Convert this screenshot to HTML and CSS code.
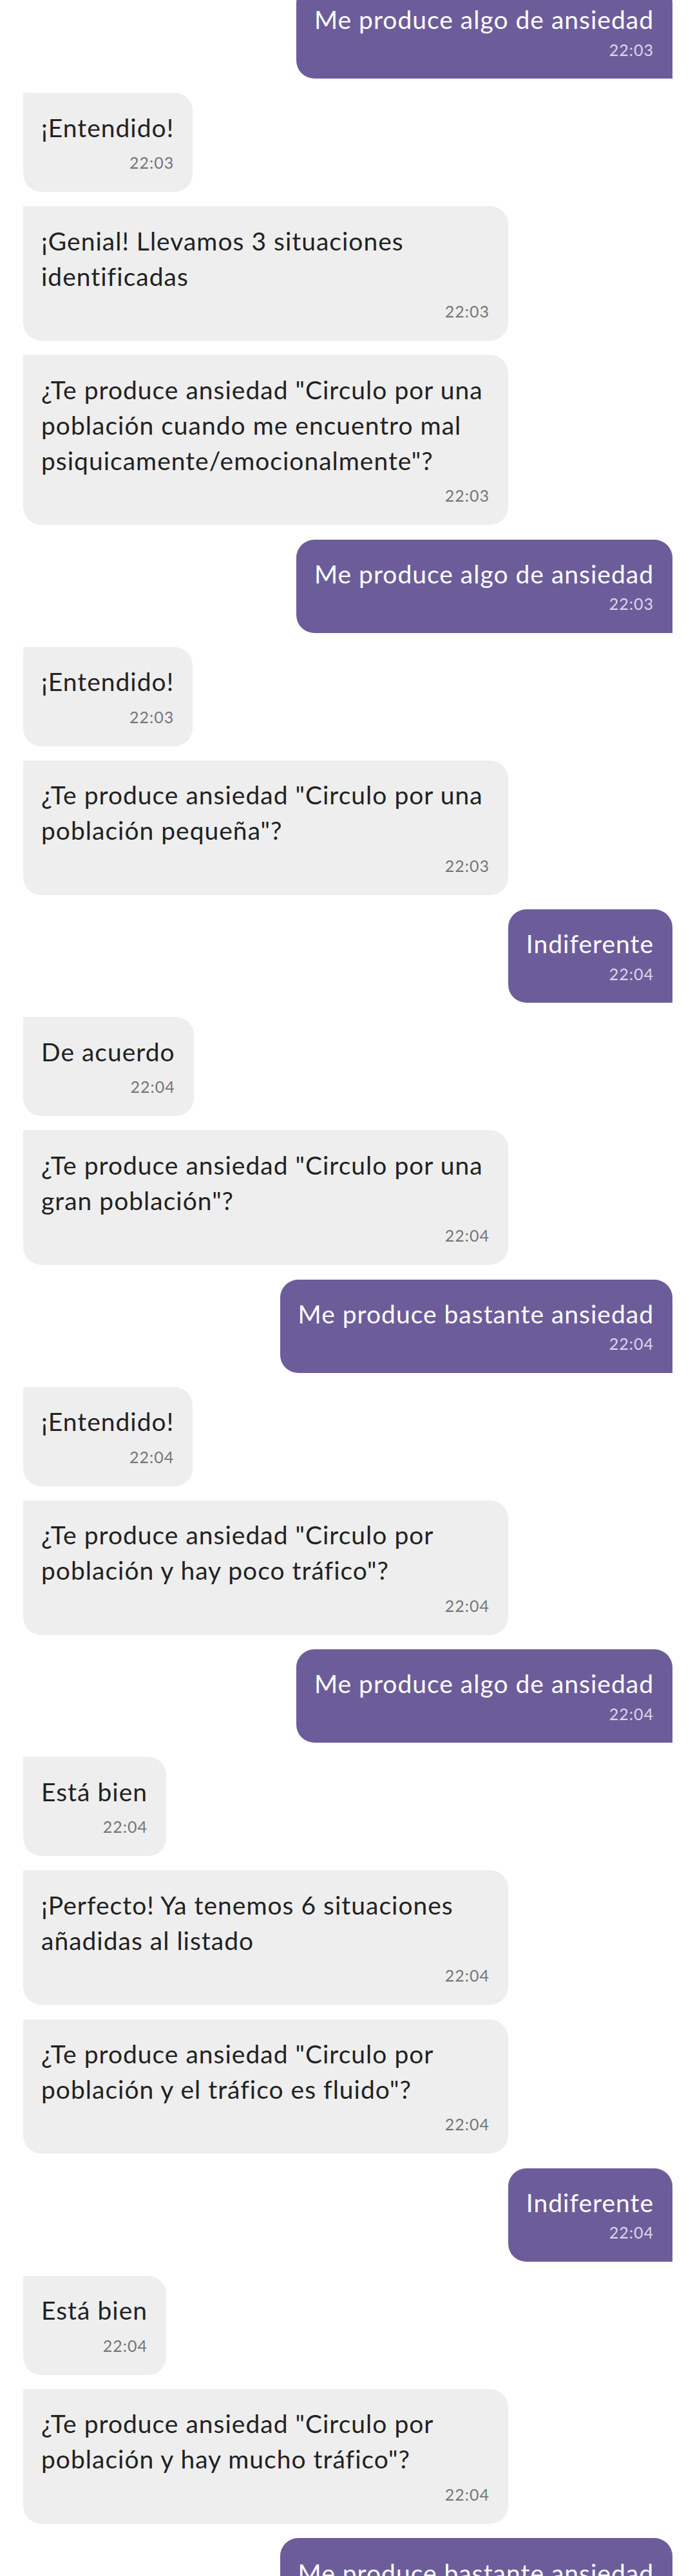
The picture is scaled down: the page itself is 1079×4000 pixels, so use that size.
FILE: index.html
```html
<!DOCTYPE html>
<html lang="es">
<head>
<meta charset="utf-8">
<title>Chat</title>
<link rel="stylesheet" href="styles.css">
</head>
<body>
<div class="chat">
  <div class="msg user"><p class="text">Me produce algo de ansiedad</p><span class="time">22:03</span></div>
  <div class="msg bot"><p class="text">¡Entendido!</p><span class="time">22:03</span></div>
  <div class="msg bot"><p class="text">¡Genial! Llevamos 3 situaciones identificadas</p><span class="time">22:03</span></div>
  <div class="msg bot"><p class="text">¿Te produce ansiedad "Circulo por una población cuando me encuentro mal psiquicamente/emocionalmente"?</p><span class="time">22:03</span></div>
  <div class="msg user"><p class="text">Me produce algo de ansiedad</p><span class="time">22:03</span></div>
  <div class="msg bot"><p class="text">¡Entendido!</p><span class="time">22:03</span></div>
  <div class="msg bot"><p class="text">¿Te produce ansiedad "Circulo por una población pequeña"?</p><span class="time">22:03</span></div>
  <div class="msg user"><p class="text">Indiferente</p><span class="time">22:04</span></div>
  <div class="msg bot"><p class="text">De acuerdo</p><span class="time">22:04</span></div>
  <div class="msg bot"><p class="text">¿Te produce ansiedad "Circulo por una gran población"?</p><span class="time">22:04</span></div>
  <div class="msg user"><p class="text">Me produce bastante ansiedad</p><span class="time">22:04</span></div>
  <div class="msg bot"><p class="text">¡Entendido!</p><span class="time">22:04</span></div>
  <div class="msg bot"><p class="text">¿Te produce ansiedad "Circulo por población y hay poco tráfico"?</p><span class="time">22:04</span></div>
  <div class="msg user"><p class="text">Me produce algo de ansiedad</p><span class="time">22:04</span></div>
  <div class="msg bot"><p class="text">Está bien</p><span class="time">22:04</span></div>
  <div class="msg bot"><p class="text">¡Perfecto! Ya tenemos 6 situaciones añadidas al listado</p><span class="time">22:04</span></div>
  <div class="msg bot"><p class="text">¿Te produce ansiedad "Circulo por población y el tráfico es fluido"?</p><span class="time">22:04</span></div>
  <div class="msg user"><p class="text">Indiferente</p><span class="time">22:04</span></div>
  <div class="msg bot"><p class="text">Está bien</p><span class="time">22:04</span></div>
  <div class="msg bot"><p class="text">¿Te produce ansiedad "Circulo por población y hay mucho tráfico"?</p><span class="time">22:04</span></div>
  <div class="msg user"><p class="text">Me produce bastante ansiedad</p><span class="time">22:04</span></div>
</div>
</body>
</html>
```
FILE: styles.css
```css
html, body {
  margin: 0;
  padding: 0;
  background: #ffffff;
}

body {
  font-family: "Lato", "Noto Sans", "Liberation Sans", sans-serif;
  overflow: hidden;
}

.chat {
  display: flex;
  flex-direction: column;
  gap: 22.2px;
  margin-top: -23px;
  padding: 0 35px 0 36px;
}

.msg {
  display: flex;
  flex-direction: column;
  max-width: 753px;
  box-sizing: border-box;
  padding: 26.4px 29px 33.2px 28px;
}

.text {
  margin: 0;
  font-size: 39px;
  line-height: 55px;
  letter-spacing: 1px;
}

.time {
  display: block;
  text-align: right;
  font-size: 25px;
  line-height: 25px;
  letter-spacing: 1px;
  margin-top: 14.4px;
}

.bot {
  align-self: flex-start;
  background: #eeeeee;
  color: #222222;
  border-radius: 0 28px 28px 28px;
}

.bot .time {
  color: #767676;
}

.user {
  align-self: flex-end;
  background: #6c5d9a;
  color: #ffffff;
  border-radius: 28px 28px 0 28px;
  padding-bottom: 32.2px;
}

.user .time {
  color: #dcd6ec;
  margin-top: 6.4px;
}
```
